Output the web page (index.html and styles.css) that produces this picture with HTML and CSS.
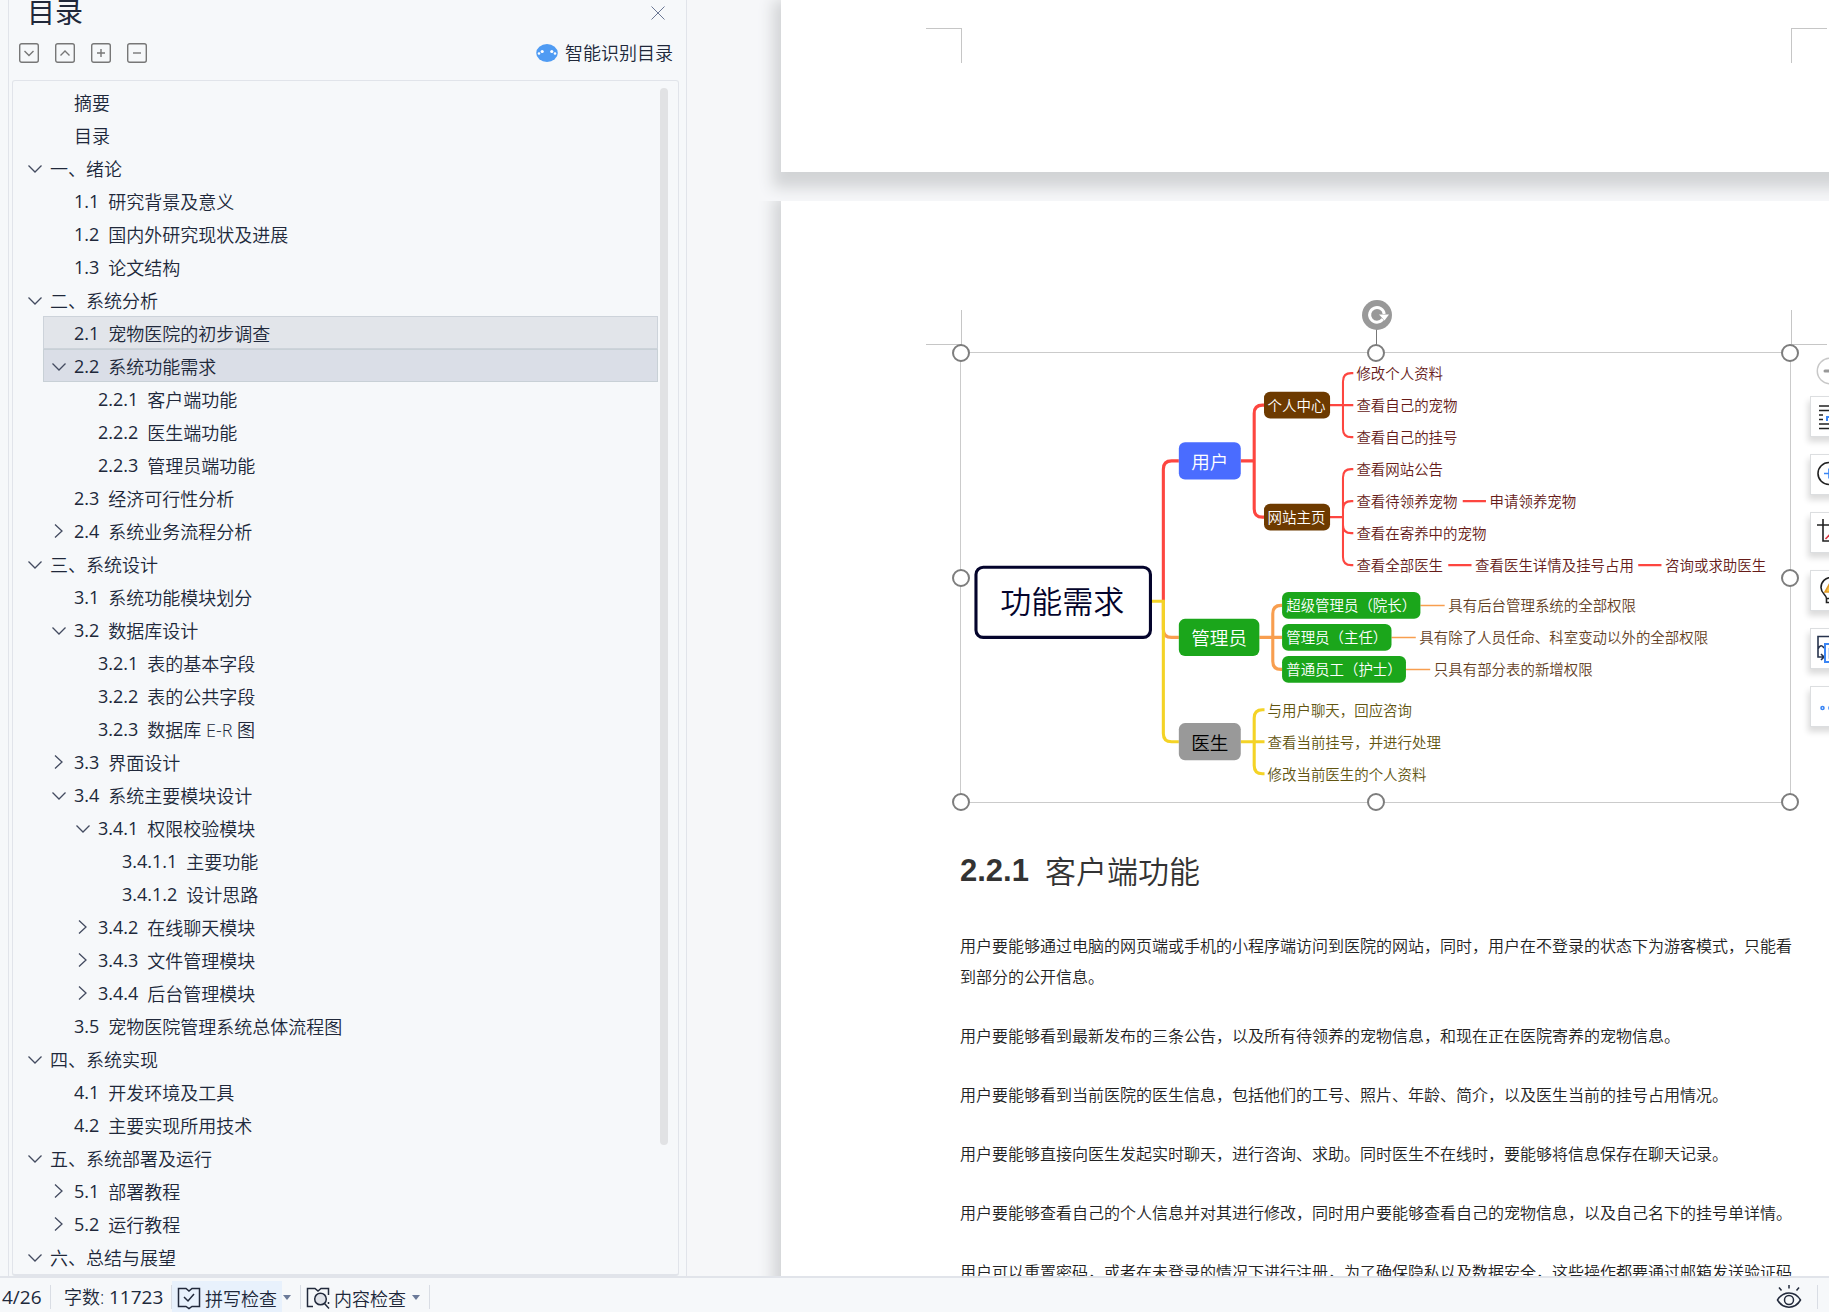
FILE: index.html
```html
<!DOCTYPE html>
<html lang="zh-CN">
<head>
<meta charset="utf-8">
<title>文档</title>
<link rel="stylesheet" href="styles.css">
</head>
<body>
<svg class="defs" aria-hidden="true">
  <symbol id="down" viewBox="0 0 16 16"><path d="M1.500 5.500 8 12 14.500 5.500"/></symbol>
  <symbol id="right" viewBox="0 0 16 16"><path d="M4 1.500 11 8 4 14.500"/></symbol>
</svg>
<div class="app">
  <div class="workspace">
    <aside class="outline">
      <header class="outline-head">
        <h2>目录</h2>
        <button class="close" aria-label="关闭"><svg width="14" height="14" viewBox="0 0 14 14"><path d="M.5.5l13 13M13.500.5l-13 13"/></svg></button>
      </header>
      <div class="outline-tools">
        <div class="levels">
          <button aria-label="展开"><svg viewBox="0 0 20 20"><rect x=".7" y=".7" width="18.600" height="18.600" rx="2"/><path d="M5.500 8l4.500 4.500L14.500 8"/></svg></button>
          <button aria-label="收起"><svg viewBox="0 0 20 20"><rect x=".7" y=".7" width="18.600" height="18.600" rx="2"/><path d="M5.500 12.500L10 8l4.500 4.500"/></svg></button>
          <button aria-label="增加"><svg viewBox="0 0 20 20"><rect x=".7" y=".7" width="18.600" height="18.600" rx="2"/><path d="M6 10h8M10 6v8"/></svg></button>
          <button aria-label="减少"><svg viewBox="0 0 20 20"><rect x=".7" y=".7" width="18.600" height="18.600" rx="2"/><path d="M6 10h8"/></svg></button>
        </div>
        <button class="smart">
          <svg width="22" height="18" viewBox="0 0 22 18"><ellipse cx="11" cy="9" rx="10.800" ry="9" fill="#4f9bf3"/><g fill="#fff"><circle cx="3" cy="9.500" r="1.300"/><circle cx="6.200" cy="7.500" r="1.600"/><circle cx="15.800" cy="7.500" r="1.600"/><circle cx="19" cy="9.500" r="1.300"/></g></svg>
          智能识别目录
        </button>
      </div>
      <nav class="tree">
        <ul>
          <li class="l1"><a href="#"><i></i>摘要</a></li>
          <li class="l1"><a href="#"><i></i>目录</a></li>
          <li class="l0"><a href="#"><svg><use href="#down"/></svg>一、绪论</a></li>
          <li class="l1"><a href="#"><i></i><b>1.1</b>研究背景及意义</a></li>
          <li class="l1"><a href="#"><i></i><b>1.2</b>国内外研究现状及进展</a></li>
          <li class="l1"><a href="#"><i></i><b>1.3</b>论文结构</a></li>
          <li class="l0"><a href="#"><svg><use href="#down"/></svg>二、系统分析</a></li>
          <li class="l1 hover"><a href="#"><i></i><b>2.1</b>宠物医院的初步调查</a></li>
          <li class="l1 current"><a href="#"><svg><use href="#down"/></svg><b>2.2</b>系统功能需求</a></li>
          <li class="l2"><a href="#"><i></i><b>2.2.1</b>客户端功能</a></li>
          <li class="l2"><a href="#"><i></i><b>2.2.2</b>医生端功能</a></li>
          <li class="l2"><a href="#"><i></i><b>2.2.3</b>管理员端功能</a></li>
          <li class="l1"><a href="#"><i></i><b>2.3</b>经济可行性分析</a></li>
          <li class="l1"><a href="#"><svg><use href="#right"/></svg><b>2.4</b>系统业务流程分析</a></li>
          <li class="l0"><a href="#"><svg><use href="#down"/></svg>三、系统设计</a></li>
          <li class="l1"><a href="#"><i></i><b>3.1</b>系统功能模块划分</a></li>
          <li class="l1"><a href="#"><svg><use href="#down"/></svg><b>3.2</b>数据库设计</a></li>
          <li class="l2"><a href="#"><i></i><b>3.2.1</b>表的基本字段</a></li>
          <li class="l2"><a href="#"><i></i><b>3.2.2</b>表的公共字段</a></li>
          <li class="l2"><a href="#"><i></i><b>3.2.3</b>数据库 E-R 图</a></li>
          <li class="l1"><a href="#"><svg><use href="#right"/></svg><b>3.3</b>界面设计</a></li>
          <li class="l1"><a href="#"><svg><use href="#down"/></svg><b>3.4</b>系统主要模块设计</a></li>
          <li class="l2"><a href="#"><svg><use href="#down"/></svg><b>3.4.1</b>权限校验模块</a></li>
          <li class="l3"><a href="#"><i></i><b>3.4.1.1</b>主要功能</a></li>
          <li class="l3"><a href="#"><i></i><b>3.4.1.2</b>设计思路</a></li>
          <li class="l2"><a href="#"><svg><use href="#right"/></svg><b>3.4.2</b>在线聊天模块</a></li>
          <li class="l2"><a href="#"><svg><use href="#right"/></svg><b>3.4.3</b>文件管理模块</a></li>
          <li class="l2"><a href="#"><svg><use href="#right"/></svg><b>3.4.4</b>后台管理模块</a></li>
          <li class="l1"><a href="#"><i></i><b>3.5</b>宠物医院管理系统总体流程图</a></li>
          <li class="l0"><a href="#"><svg><use href="#down"/></svg>四、系统实现</a></li>
          <li class="l1"><a href="#"><i></i><b>4.1</b>开发环境及工具</a></li>
          <li class="l1"><a href="#"><i></i><b>4.2</b>主要实现所用技术</a></li>
          <li class="l0"><a href="#"><svg><use href="#down"/></svg>五、系统部署及运行</a></li>
          <li class="l1"><a href="#"><svg><use href="#right"/></svg><b>5.1</b>部署教程</a></li>
          <li class="l1"><a href="#"><svg><use href="#right"/></svg><b>5.2</b>运行教程</a></li>
          <li class="l0"><a href="#"><svg><use href="#down"/></svg>六、总结与展望</a></li>
        </ul>
        <span class="thumb"></span>
      </nav>
    </aside>

    <main class="canvas">
      <section class="page page-prev">
        <span class="mark bl"></span><span class="mark br"></span>
      </section>
      <section class="page page-cur">
        <span class="mark tl"></span><span class="mark tr"></span>
        <figure class="picture">
          <svg class="mind" viewBox="0 0 803 435">
            <g class="w3 red">
              <path d="M196 241V112.500q0-8 8-8H211"/>
              <path d="M271 104.500H284M294 50.500H292q-8 0-8 8V151q0 8 8 8H294"/>
            </g>
            <g class="w2 red">
              <path d="M357 50.500H380M380 19.500H378q-8 0-8 8V73.500q0 8 8 8H380"/>
              <path d="M357 159H370M380 112.500H378q-8 0-8 8V197.500q0 8 8 8H380M370 151.500q0-8 8-8H380M370 166.500q0 8 8 8H380"/>
              <path d="M486 143.500H508.500M472 205.500H494.500M656 205.500H678.500"/>
            </g>
            <g class="w3 orange">
              <path d="M196 241V267.500q0 8 8 8H211"/>
              <path d="M289 275.500H311M311 244.500H310q-8 0-8 8V298.500q0 8 8 8H311"/>
            </g>
            <path class="w1 orange" d="M445 244.500H468.500M417 275.500H440.500M431 306.500H454.500"/>
            <g class="w3 yellow">
              <path d="M184 240.500H196V368.500q0 8 8 8H211"/>
              <path d="M271 376.500H294M294 345.500H292q-8 0-8 8V399.500q0 8 8 8H294"/>
            </g>
            <rect x="14.500" y="207.500" width="169" height="68" rx="7" fill="#fff" stroke="#04042c" stroke-width="3"/>
            <rect x="211" y="86.500" width="60" height="36" rx="6" fill="#4a6cff"/>
            <rect x="211" y="257.500" width="78" height="36" rx="6" fill="#1ba61b"/>
            <rect x="211" y="358.500" width="60" height="36" rx="6" fill="#999"/>
            <g fill="#6d3a00"><rect x="293.500" y="37.500" width="64" height="26" rx="6"/><rect x="293.500" y="146" width="64" height="26" rx="6"/></g>
            <g fill="#1ba61b"><rect x="311" y="231.500" width="134" height="26" rx="6"/><rect x="311" y="262.500" width="106" height="26" rx="6"/><rect x="311" y="293.500" width="120" height="26" rx="6"/></g>
            <text class="root" x="98" y="239">功能需求</text>
            <g class="branch"><text x="241" y="104" fill="#fff">用户</text><text x="250" y="275" fill="#fff">管理员</text><text x="241" y="376" fill="#000">医生</text></g>
            <g fill="#fff"><text x="297" y="50">个人中心</text><text x="297" y="158">网站主页</text><text x="315" y="244">超级管理员（院长）</text><text x="315" y="275">管理员（主任）</text><text x="315" y="306">普通员工（护士）</text></g>
            <g fill="#661b18">
              <text x="383" y="19">修改个人资料</text><text x="383" y="50">查看自己的宠物</text><text x="383" y="81">查看自己的挂号</text>
              <text x="383" y="112">查看网站公告</text><text x="383" y="143">查看待领养宠物</text><text x="512" y="143">申请领养宠物</text>
              <text x="383" y="174">查看在寄养中的宠物</text><text x="383" y="205">查看全部医生</text><text x="498" y="205">查看医生详情及挂号占用</text><text x="682" y="205">咨询或求助医生</text>
            </g>
            <g fill="#643f1f"><text x="472" y="244">具有后台管理系统的全部权限</text><text x="444" y="275">具有除了人员任命、科室变动以外的全部权限</text><text x="458" y="306">只具有部分表的新增权限</text></g>
            <g fill="#625510"><text x="297" y="345">与用户聊天，回应咨询</text><text x="297" y="376">查看当前挂号，并进行处理</text><text x="297" y="407">修改当前医生的个人资料</text></g>
          </svg>
          <span class="stem"></span>
          <span class="rotate"><svg viewBox="0 0 30 30"><path d="M20.800 19.200A7.300 7.300 0 1 1 22.200 14" fill="none" stroke="#fff" stroke-width="3"/><path d="M17 14.500h10l-4.500 6z" fill="#fff"/></svg></span>
          <span class="grip n w"></span><span class="grip n c"></span><span class="grip n e"></span>
          <span class="grip m w"></span><span class="grip m e"></span>
          <span class="grip s w"></span><span class="grip s c"></span><span class="grip s e"></span>
        </figure>
        <h3><span>2.2.1</span>客户端功能</h3>
        <p>用户要能够通过电脑的网页端或手机的小程序端访问到医院的网站，同时，用户在不登录的状态下为游客模式，只能看到部分的公开信息。</p>
        <p>用户要能够看到最新发布的三条公告，以及所有待领养的宠物信息，和现在正在医院寄养的宠物信息。</p>
        <p>用户要能够看到当前医院的医生信息，包括他们的工号、照片、年龄、简介，以及医生当前的挂号占用情况。</p>
        <p>用户要能够直接向医生发起实时聊天，进行咨询、求助。同时医生不在线时，要能够将信息保存在聊天记录。</p>
        <p>用户要能够查看自己的个人信息并对其进行修改，同时用户要能够查看自己的宠物信息，以及自己名下的挂号单详情。</p>
        <p>用户可以重置密码，或者在未登录的情况下进行注册，为了确保隐私以及数据安全，这些操作都要通过邮箱发送验证码</p>
      </section>
      <div class="float">
        <button class="fold" aria-label="收起工具"><svg viewBox="0 0 28 28"><circle cx="14" cy="14" r="12.700" fill="#fff" stroke="#c8c8c8" stroke-width="1.500"/><path d="M9 14h10" stroke="#999" stroke-width="3" stroke-linecap="round"/></svg></button>
        <button aria-label="环绕"><svg viewBox="0 0 28 28"><path d="M2 3h24M2 7.500h24M2 12h4M2 16.500h4M2 21h24M2 25.500h24" stroke="#222"/><path d="M10 18v-4h8" stroke="#3b86f5" stroke-width="2"/></svg></button>
        <button aria-label="放大"><svg viewBox="0 0 28 28"><circle cx="12" cy="12.500" r="11" stroke="#222"/><path d="M12 7.500v10M7 12.500h10" stroke="#3b86f5"/></svg></button>
        <button aria-label="裁剪"><svg viewBox="0 0 28 28"><path d="M0 6h20v20M6 0v22h20" stroke="#222"/><path d="M8.500 20 20 8" stroke="#d9343f"/></svg></button>
        <button aria-label="灵感"><svg viewBox="0 0 28 28"><path d="M9.500 21.500c0-4-5.500-5-5.500-11a10 10 0 0 1 20 0c0 6-5.500 7-5.500 11zM9.500 21.500v4h9v-4" stroke="#222"/><path d="M13 6l-5 9h5v6l5-9h-5z" fill="#fbc540" stroke="#e09a28"/></svg></button>
        <button aria-label="转换"><svg viewBox="0 0 28 28"><path d="M20 6V1.500H1V22h6M4 19l3 3-3 3M1 14q3-6 6-1" stroke="#26334d"/><path d="M8 9h17v18H8z" fill="#fff" stroke="#3b86f5" stroke-width="2"/><path d="M12 13v10h9" stroke="#b9d3fb"/></svg></button>
        <button aria-label="更多"><svg viewBox="0 0 28 28"><g fill="none" stroke="#3b86f5"><circle cx="5.500" cy="15" r="1.500"/><circle cx="13.500" cy="15" r="1.500"/><circle cx="21.500" cy="15" r="1.500"/></g></svg></button>
      </div>
    </main>
  </div>

  <footer class="status">
    <span class="pages"><b>4/26</b></span>
    <span class="count">字数: <b>11723</b></span>
    <button class="check on"><svg width="24" height="24" viewBox="0 0 24 24"><path d="M1.500 2.500H9L12 5l3-2.500h7.500v18H15L12 22.500 9 20.500H1.500zM7 11l4 4 6-7"/></svg><span>拼写检查</span></button>
    <span class="caret"></span>
    <button class="check"><svg width="24" height="24" viewBox="0 0 24 24"><path d="M7 20.500H1.500v-18H9L12 5l3-2.500h7.500V9M22.500 16v2"/><circle cx="14.500" cy="13" r="5.800" fill="#dfe2e8"/><path d="M18.500 17.500l4.500 5"/></svg><span>内容检查</span></button>
    <span class="caret"></span>
    <span class="fill"></span>
    <button class="eye" aria-label="护眼模式"><svg width="26" height="26" viewBox="0 0 26 26"><path d="M1.500 15C7 5.500 19 5.500 24.500 15 19 24.500 7 24.500 1.500 15zM13 0v3.500M3 2.500l2.500 3M23 2.500l-2.500 3"/><circle cx="13" cy="15" r="4.500"/></svg></button>
  </footer>
</div>
</body>
</html>
```
FILE: styles.css
```css
* { box-sizing: border-box; }
body {
  margin: 0;
  font: 350 18px "Open Sans", "Noto Sans CJK SC", sans-serif;
  color: #20283a;
  background: #f6f8fa;
}
button { padding: 0; border: 0; background: none; font: inherit; color: inherit; }
h2, h3, p, ul, figure { margin: 0; padding: 0; }
svg { display: block; fill: none; }
.defs { position: absolute; width: 0; height: 0; }

.app { display: flex; flex-direction: column; height: 100vh; overflow: hidden; }
.workspace { display: flex; flex: 1; min-height: 0; }

/* outline panel */
.outline {
  display: flex;
  flex-direction: column;
  flex: none;
  width: 679px;
  margin-left: 8px;
  padding: 0 7px 0 3px;
  border: solid #e1e4ea;
  border-width: 0 1px;
}
.outline-head { display: flex; justify-content: space-between; align-items: center; height: 25px; padding: 0 14px 0 15px; }
.outline-head h2 { font-size: 28px; line-height: 25px; font-weight: 400; }
.close svg { stroke: #6b7794; stroke-width: 1; }
.outline-tools { display: flex; justify-content: space-between; align-items: center; height: 55px; padding: 0 6px 0 7px; }
.levels { display: flex; gap: 16px; }
.levels svg { width: 20px; height: 20px; stroke: #777; stroke-width: 1.4; }
.smart { display: flex; align-items: center; gap: 7px; line-height: 26px; }

.tree {
  position: relative;
  flex: 1;
  min-height: 0;
  padding: 4px 20px 0 6px;
  border: 1px solid #e1e4ea;
  border-bottom-width: 2px;
  border-radius: 3px;
  overflow: hidden;
}
.tree ul { list-style: none; }
.tree li { height: 33px; border: 1px solid transparent; }
.tree a { display: flex; align-items: center; height: 31px; padding-left: 7px; color: inherit; text-decoration: none; }
.tree i, .tree svg { flex: none; width: 16px; height: 16px; margin-right: 7px; }
.tree svg { stroke: #434b60; stroke-width: 1.3; }
.tree b { font-weight: 400; margin-right: 9px; }
.tree .l1 { margin-left: 24px; }
.tree .l2 { margin-left: 48px; }
.tree .l3 { margin-left: 72px; }
.tree .hover { background: #e2e5ea; border-color: #cdd3da; }
.tree .current { background: #dadee7; border-color: #c8d0d6; }
.thumb { position: absolute; top: 7px; right: 10px; bottom: 129px; width: 8px; border-radius: 4px; background: #e1e2e4; }

/* document */
.canvas { position: relative; flex: 1; min-width: 0; padding-left: 94px; overflow: hidden; background: #f6f7f9; }
.page { position: relative; width: 1190px; background: #fff; box-shadow: 0 4px 14px 8px #d2d4d6; }
.page-prev { height: 172px; margin-bottom: 29px; box-shadow: 0 8px 14px 8px #d2d4d6; }
.page-cur { min-height: 1300px; padding: 151px 179px 0 179px; color: #222; clip-path: inset(0 0 0 -40px); }
.mark { position: absolute; width: 36px; height: 35px; border: 0 solid #c6c6c6; }
.bl { top: 28px; left: 145px; border-width: 1px 1px 0 0; }
.br { top: 28px; right: 144px; border-width: 1px 0 0 1px; }
.tl { top: 109px; left: 145px; border-width: 0 1px 1px 0; }
.tr { top: 109px; right: 144px; border-width: 0 0 1px 1px; }

.picture { position: relative; width: 831px; border: 1px solid #cbcbcb; }
.mind { width: 100%; height: auto; }
.mind text { font: 350 14px "Noto Sans CJK SC", sans-serif; dominant-baseline: central; }
.mind .root { font-size: 30px; text-anchor: middle; fill: #04042c; }
.mind .branch text { font-size: 18px; text-anchor: middle; }
.w3 { stroke-width: 3; }
.w2 { stroke-width: 2; }
.w1 { stroke-width: 1.5; }
.red { stroke: #fd4640; }
.orange { stroke: #f89e4f; }
.yellow { stroke: #f4d326; }

.grip { position: absolute; width: 18px; height: 18px; margin: -9px; border: 2px solid #7d7d7d; border-radius: 50%; background: #fff; }
.n { top: 0; } .m { top: 50%; } .s { top: 100%; }
.w { left: 0; } .c { left: 50%; } .e { left: 100%; }
.stem { position: absolute; left: 50%; top: -30px; width: 1px; height: 24px; background: #777; }
.rotate { position: absolute; left: 50%; top: -53px; width: 30px; height: 30px; margin-left: -14px; border-radius: 50%; background: #999; }

h3 { display: flex; gap: 16px; margin-top: 48px; font-size: 31px; line-height: 40px; font-weight: 350; color: #333; }
h3 span { font-family: "Liberation Sans", sans-serif; font-weight: 700; }
h3 + p { margin-top: 39px; }
p { margin-bottom: 28px; font: 350 16px/31px "Noto Sans CJK SC", sans-serif; }

.float { position: absolute; top: 357px; right: -22px; display: flex; flex-direction: column; gap: 17px; }
.float button { width: 41px; height: 41px; padding: 6px; border: 1px solid #dcdee0; background: #fff; box-shadow: -2px 5px 6px #dcdcdc; }
.float svg { width: 28px; height: 28px; stroke-width: 1.6; }
.float .fold { height: 26px; margin-bottom: -4px; padding: 0 6px; border: 0; background: none; box-shadow: none; }

/* status bar */
.status { display: flex; align-items: center; flex: none; height: 36px; padding: 4px 11px 0 2px; border-top: 2px solid #e1e4ea; }
.status > * { flex: none; }
.status b { font-size: 19px; font-weight: 400; }
.pages, .count, .caret, .eye { height: 24px; line-height: 24px; border-right: 1px solid #d9dde4; }
.pages { width: 49px; }
.count { width: 121px; padding-left: 13px; }
.check { display: flex; align-items: center; gap: 4px; height: 32px; padding: 2px 5px 0 5px; }
.on { background: #e8f1fc; }
.status svg { stroke: #222a3c; stroke-width: 1.5; }
.caret { width: 19px; display: flex; align-items: center; }
.caret::before { content: ""; margin-left: 1px; border: 4px solid transparent; border-top: 5px solid #6b7a99; border-bottom: 0; }
.status .fill { flex: 1; }
.eye { width: 42px; }
```
